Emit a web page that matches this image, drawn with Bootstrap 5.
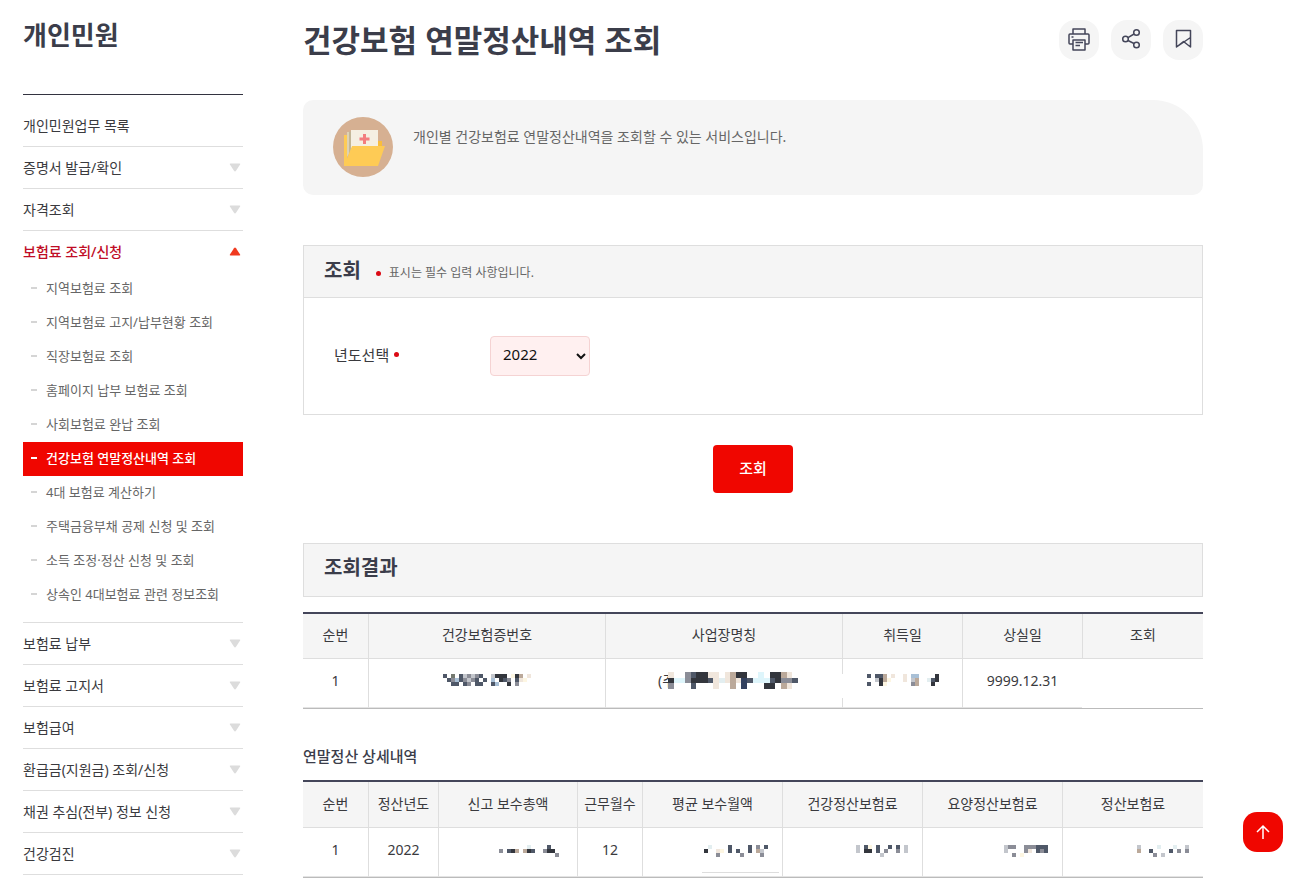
<!DOCTYPE html>
<html lang="ko">
<head>
<meta charset="utf-8">
<meta name="viewport" content="width=device-width, initial-scale=1">
<title>건강보험 연말정산내역 조회</title>
<link href="https://cdn.jsdelivr.net/npm/bootstrap@5.3.0/dist/css/bootstrap.min.css" rel="stylesheet">
<style>
:root { --ink: #3b3d4a; --soft: #666; --rule: #dedede; --pale: #f5f5f5; --red: #f00600; }
body { font-family: "Noto Sans", "Noto Sans CJK KR", sans-serif; font-size: 14px; line-height: 20px; color: #3a3a3e; }
a { color: inherit; text-decoration: none; }
.page { padding: 0 106px 0 23px; gap: 60px; }
.side { flex: 0 0 220px; }
.side h2 { font-size: 26px; line-height: 38px; padding: 16px 0 40px; margin: 0; font-weight: 700; color: var(--ink); border-bottom: 1px solid #333340; }
.menu { padding-top: 10px; }
.menu > li { border-bottom: 1px solid var(--rule); }
.menu > li > a { height: 41px; }
.menu > li > a.open { color: #c00d26; font-weight: 500; }
.tri { width: 12px; height: 9px; margin-right: 2px; fill: #dcdcdc; }
.open .tri { fill: #f0391f; }
.submenu { padding-bottom: 10px; }
.submenu a { display: flex; align-items: center; height: 34px; font-size: 13px; color: var(--soft); padding: 0 0 2px 8px; gap: 9px; }
.submenu a::before { content: ""; width: 6px; height: 2px; background: #d5d5d5; }
.submenu .current { background: var(--red); color: #fff; font-weight: 500; }
.submenu .current::before { background: #fff; }
.content { min-width: 0; }
.top-row { padding-top: 20px; }
.tools { gap: 12px; }
.content h1 { font-size: 31px; line-height: 40px; font-weight: 700; color: var(--ink); margin: 0; }
.tool { width: 40px; height: 40px; border-radius: 16px; background: var(--pale); color: #44465a; }
.tool svg { display: block; margin: 0 auto 2px; }
.intro { min-height: 95px; margin-top: 40px; padding: 17px 30px; gap: 20px; background: var(--pale); border-radius: 10px 50px 10px 10px; color: var(--soft); }
.intro p { margin: 10px 0 0; }
.panel { margin-top: 50px; border: 1px solid var(--rule); }
.panel-head { padding: 0 20px 2px; height: 51px; background: var(--pale); }
.panel-head h2 { font-size: 20px; line-height: 28px; font-weight: 600; color: var(--ink); margin: 0; }
.panel-head small { font-size: 12px; color: var(--soft); margin-top: 4px; }
.panel-head .dot { margin: 6px 8px 0 15px; }
.panel-head.tall { height: 52px; padding-bottom: 4px; }
.panel-body { padding: 38px 30px; border-top: 1px solid var(--rule); }
.panel-body label { width: 156px; font-size: 15px; padding-bottom: 2px; }
.panel-body .dot { margin: 0 0 4px 1px; }
.dot { display: inline-block; width: 5px; height: 5px; border-radius: 50%; background: #db0a14; }
.year { width: 100px; height: 40px; padding: 0 0 4px 8px; font-size: 15px; color: #111; background: #fff0f0; border: 1px solid #f5d3d3; border-radius: 4px; }
.submit { width: 80px; height: 48px; margin-top: 30px; padding-bottom: 4px; font-size: 15px; font-weight: 500; color: #fff; background: var(--red); border: 0; border-radius: 4px; }
.grid-table { width: 100%; table-layout: fixed; text-align: center; border-top: 2px solid #44465a; border-bottom: 1px solid #bbb; border-collapse: separate; border-spacing: 0; }
.results { margin-top: 15px; }
.grid-table th { height: 45px; padding: 0 0 2px; font-weight: 400; white-space: nowrap; background: var(--pale); border-bottom: 1px solid var(--rule); }
.details th { height: 46px; }
.grid-table td { height: 49px; padding: 0 0 4px; border-bottom: 1px solid #e4e4e4; position: relative; }
.grid-table th + th, .grid-table td + td { border-left: 1px solid var(--rule); }
.grid-table td.blank { border-left-color: transparent; border-bottom-color: transparent; }
.results .mosaic { margin-bottom: 4px; }
.grid-table .amount { text-align: right; padding-right: 14px; }
.subtitle { font-size: 15px; line-height: 22px; font-weight: 500; color: var(--ink); margin: 36px 0 13px; }
.firm { margin-left: 8px; }
.firm .mosaic { margin: 0 0 2px -7px; background: #fff; }
.wipe { left: -1px; top: 15px; width: 2px; height: 24px; background: #fff; }
.stub { left: 59px; right: 3px; bottom: 3px; height: 1px; background: #ddd; }
.to-top { right: 26px; bottom: 37px; width: 40px; height: 40px; border: 0; border-radius: 14px; background: var(--red); }
</style>
</head>
<body>
<svg class="d-none"><symbol id="down" viewBox="0 0 12 9"><path d="M1.500.5h9q1.200 0 .6 1L7 7.800q-1 1.200-2 0L.9 1.500q-.6-1 .6-1z"/></symbol>
<symbol id="up" viewBox="0 0 12 9"><path d="M1.500 8.500h9q1.200 0 .6-1L7 1.200q-1-1.200-2 0L.9 7.500q-.6 1 .6 1z"/></symbol></svg>
<div class="page d-flex">
  <nav class="side" aria-label="개인민원">
    <h2>개인민원</h2>
    <ul class="menu list-unstyled mb-0">
      <li><a href="#" class="d-flex align-items-center justify-content-between">개인민원업무 목록</a></li>
      <li><a href="#" class="d-flex align-items-center justify-content-between">증명서 발급/확인<svg class="tri"><use href="#down"/></svg></a></li>
      <li><a href="#" class="d-flex align-items-center justify-content-between">자격조회<svg class="tri"><use href="#down"/></svg></a></li>
      <li><a href="#" class="open d-flex align-items-center justify-content-between">보험료 조회/신청<svg class="tri"><use href="#up"/></svg></a>
        <ul class="submenu list-unstyled">
          <li><a href="#">지역보험료 조회</a></li>
          <li><a href="#">지역보험료 고지/납부현황 조회</a></li>
          <li><a href="#">직장보험료 조회</a></li>
          <li><a href="#">홈페이지 납부 보험료 조회</a></li>
          <li><a href="#">사회보험료 완납 조회</a></li>
          <li><a href="#" class="current" aria-current="page">건강보험 연말정산내역 조회</a></li>
          <li><a href="#">4대 보험료 계산하기</a></li>
          <li><a href="#">주택금융부채 공제 신청 및 조회</a></li>
          <li><a href="#">소득 조정·정산 신청 및 조회</a></li>
          <li><a href="#">상속인 4대보험료 관련 정보조회</a></li>
        </ul>
      </li>
      <li><a href="#" class="d-flex align-items-center justify-content-between">보험료 납부<svg class="tri"><use href="#down"/></svg></a></li>
      <li><a href="#" class="d-flex align-items-center justify-content-between">보험료 고지서<svg class="tri"><use href="#down"/></svg></a></li>
      <li><a href="#" class="d-flex align-items-center justify-content-between">보험급여<svg class="tri"><use href="#down"/></svg></a></li>
      <li><a href="#" class="d-flex align-items-center justify-content-between">환급금(지원금) 조회/신청<svg class="tri"><use href="#down"/></svg></a></li>
      <li><a href="#" class="d-flex align-items-center justify-content-between">채권 추심(전부) 정보 신청<svg class="tri"><use href="#down"/></svg></a></li>
      <li><a href="#" class="d-flex align-items-center justify-content-between">건강검진<svg class="tri"><use href="#down"/></svg></a></li>
    </ul>
  </nav>

  <main class="content flex-grow-1">
    <header class="top-row d-flex justify-content-between">
      <h1>건강보험 연말정산내역 조회</h1>
      <div class="tools d-flex">
        <button class="tool btn p-0 border-0" aria-label="인쇄"><svg width="24" height="24" viewBox="0 0 24 24" fill="none" stroke="currentColor" stroke-width="1.500" stroke-linejoin="round"><path d="M6 7V2h12v5M6 17H3q-1 0-1-1V8q0-1 1-1h18q1 0 1 1v8q0 1-1 1h-3M6 13h12v10H6zM8.500 15.500H16M8.500 18.500H13M4.500 10H6.500"/></svg></button>
        <button class="tool btn p-0 border-0" aria-label="공유"><svg width="24" height="24" viewBox="0 0 24 24" fill="none" stroke="currentColor" stroke-width="1.500"><circle cx="6.500" cy="12" r="2.800"/><circle cx="17.500" cy="5.500" r="2.800"/><circle cx="17.500" cy="18" r="2.800"/><path d="M9 10.600 15 7M9 13.500l6 3"/></svg></button>
        <button class="tool btn p-0 border-0" aria-label="북마크"><svg width="24" height="24" viewBox="0 0 24 24" fill="none" stroke="currentColor" stroke-width="1.500" stroke-linejoin="round"><path d="M5.500 3.500h14V20l-7-5.500-7 5.500zM5.500 20l14-9.500"/></svg></button>
      </div>
    </header>

    <section class="intro d-flex align-items-start">
      <svg width="60" height="60" viewBox="0 0 60 60" class="flex-shrink-0"><circle cx="30" cy="30" r="30" fill="#d6b092"/><path d="M11 18h6v6h32v10H11z" fill="#f9bd3c"/><path d="M11 18h3v31h-3z" fill="#fecb55"/><path d="M14 15h7v15l-7 10z" fill="#ddd2b5"/><path d="M16 14.500h2V36h-2z" fill="#c2b697"/><path d="M18 13h27v18H18z" fill="#f5efe2"/><path d="M30 17h3v3.500h3.500v3H33V27h-3v-3.500h-3.500v-3H30z" fill="#f37d7f"/><path d="M19 29h33l-7 20H11z" fill="#fecb55"/></svg>
      <p>개인별 건강보험료 연말정산내역을 조회할 수 있는 서비스입니다.</p>
    </section>

    <form onsubmit="return false">
      <section class="panel">
        <div class="panel-head d-flex align-items-center">
          <h2>조회</h2>
          <span class="dot"></span><small>표시는 필수 입력 사항입니다.</small>
        </div>
        <div class="panel-body d-flex align-items-center">
          <label for="year">년도선택 <span class="dot align-middle"></span></label>
          <select id="year" class="year"><option>2022</option><option>2021</option></select>
        </div>
      </section>
      <div class="text-center"><button class="submit" type="submit">조회</button></div>
    </form>

    <section class="panel">
      <div class="panel-head tall d-flex align-items-center"><h2>조회결과</h2></div>
    </section>
    <table class="grid-table results">
      <colgroup><col style="width:65px"><col><col><col style="width:120px"><col style="width:120px"><col style="width:121px"></colgroup>
      <thead><tr><th>순번</th><th>건강보험증번호</th><th>사업장명칭</th><th>취득일</th><th>상실일</th><th>조회</th></tr></thead>
      <tbody><tr>
        <td>1</td>
        <td><svg class="mosaic" width="88" height="12" data-rows="d.g.dlmlmd..lkkk.ykt.p|.dmbdmlmd.d.b.kdm.dpy.|..dd.dm.dd..db..k.m..."></svg></td>
        <td><div class="firm d-flex justify-content-center align-items-center"><span>(주</span><svg class="mosaic" width="130" height="17" data-rows="p..mdkkpp.ptkk..c.kktp.|kccmkkkdpwptpndcccdkmmd|m...d...p..t.n...kk.tp."></svg></div></td>
        <td><span class="wipe position-absolute"></span><svg class="mosaic" width="72" height="12" data-rows="d.ddt.p..p.bb....k|..lkty...p.lt..wdk|d..ky......mt...k."></svg></td>
        <td>9999.12.31</td>
        <td class="blank"></td>
      </tr></tbody>
    </table>

    <h3 class="subtitle">연말정산 상세내역</h3>
    <table class="grid-table details">
      <colgroup><col style="width:65px"><col style="width:70px"><col><col style="width:65px"><col style="width:140px"><col style="width:140px"><col style="width:140px"><col style="width:141px"></colgroup>
      <thead><tr><th>순번</th><th>정산년도</th><th>신고 보수총액</th><th>근무월수</th><th>평균 보수월액</th><th>건강정산보험료</th><th>요양정산보험료</th><th>정산보험료</th></tr></thead>
      <tbody><tr>
        <td>1</td>
        <td>2022</td>
        <td class="amount"><svg class="mosaic me-1" width="60" height="12" data-rows=".......w....d..|m.dkt.tkd..mkk.|..............m"></svg></td>
        <td>12</td>
        <td class="amount"><span class="stub position-absolute"></span><svg class="mosaic" width="64" height="12" data-rows=".w....d....d.m.d|k..py.d.d..d.tl.|...m.....m....m."></svg></td>
        <td class="amount"><svg class="mosaic" width="52" height="12" data-rows="l.dy.d..d.d.l|l.kk.d.m..m.l|......l......"></svg></td>
        <td class="amount"><svg class="mosaic" width="44" height="12" data-rows="lmm..mmmddd|l....mp.dmd|..m.y......"></svg></td>
        <td class="amount"><svg class="mosaic" width="52" height="12" data-rows="l....w...w..l|t..d....d.m.m|....m.l......"></svg></td>
      </tr></tbody>
    </table>
  </main>
</div>
<button class="to-top position-fixed d-flex align-items-center justify-content-center p-0" aria-label="맨 위로"><svg width="16" height="16" viewBox="0 0 16 16" fill="none" stroke="#fff" stroke-width="1.500"><path d="M8 15V2M2 8l6-6 6 6"/></svg></button>
<script>
// Personal data is masked: every letter of data-rows is one block of the mosaic.
const shades = {k:'#33363d', d:'#4f5868', n:'#33415f', m:'#8b8d97', g:'#747970', l:'#c3c6cc', t:'#bba99a', b:'#a9c0d6', p:'#f0e6dc', y:'#fdf6e2', c:'#def5fb', w:'#e3eef0'};
document.querySelectorAll('.mosaic').forEach(svg => {
  const rows = svg.dataset.rows.split('|');
  svg.setAttribute('viewBox', `0 0 ${rows[0].length} ${rows.length}`);
  svg.setAttribute('preserveAspectRatio', 'none');
  svg.setAttribute('shape-rendering', 'crispEdges');
  svg.innerHTML = rows.map((row, y) => [...row].map((s, x) => shades[s] ? `<rect x="${x}" y="${y}" width="1" height="1" fill="${shades[s]}"/>` : '').join('')).join('');
});
</script>
<script src="https://cdn.jsdelivr.net/npm/bootstrap@5.3.0/dist/js/bootstrap.bundle.min.js"></script>
</body>
</html>
